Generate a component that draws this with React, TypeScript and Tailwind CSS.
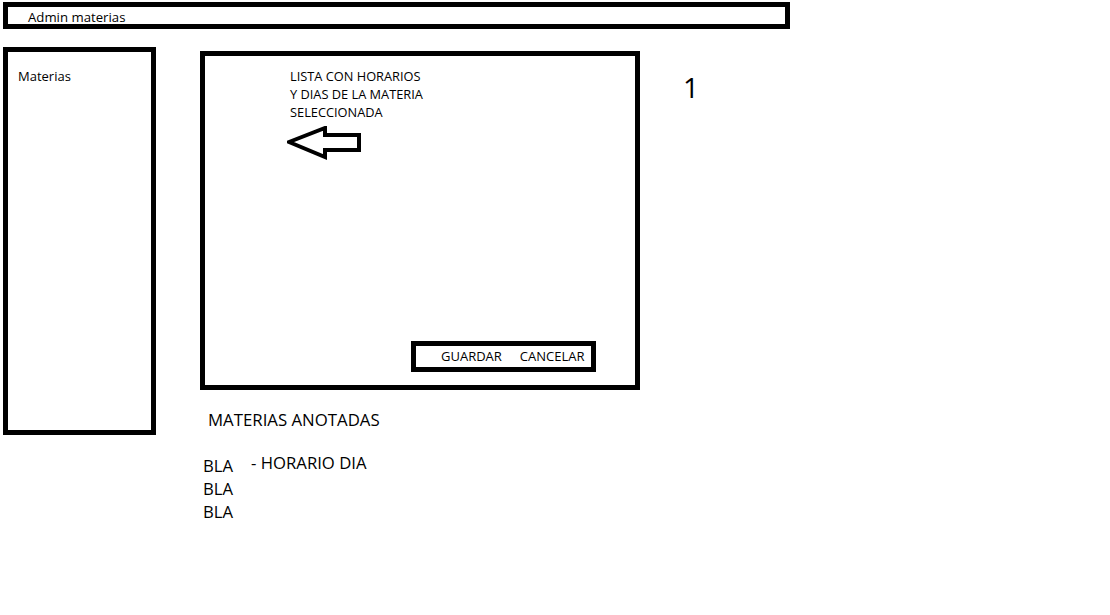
export default function App() {
  return (
    <div className="w-[1110px] h-[615px] bg-white text-black font-['Open_Sans',sans-serif] overflow-hidden">
      <div className="ml-[3px] mt-[2px] w-[787px] h-[27px] border-[5px] border-black flex items-center pt-[4px] pl-[20px] text-[13.2px] leading-none">
        Admin materias
      </div>

      <div className="flex mt-[18px]">
        <div className="ml-[3px] w-[153px] h-[388px] border-[5px] border-black pl-[10px] pt-[18px] text-[13px] leading-none">
          Materias
        </div>

        <div className="ml-[44px] mt-[4px] flex flex-col">
          <div className="w-[440px] h-[339px] border-[5px] border-black flex flex-col">
            <div className="ml-[85px] mt-[11px] text-[12.8px] leading-[18px]">
              <div>LISTA CON HORARIOS</div>
              <div>Y DIAS DE LA MATERIA</div>
              <div>SELECCIONADA</div>
            </div>
            <svg className="ml-[82px] mt-[5px]" width="76" height="34" viewBox="0 0 76 34">
              <path
                d="M2 16 L38 2 L38 9 L72 9 L72 24 L38 24 L38 31 Z"
                fill="none"
                stroke="black"
                strokeWidth="4"
                strokeLinejoin="miter"
              />
            </svg>
            <div className="mt-auto mb-[13px] mr-[39px] self-end w-[185px] h-[31px] border-[5px] border-black flex items-center pl-[25px] gap-[18px] text-[13px] leading-none">
              <span>GUARDAR</span>
              <span>CANCELAR</span>
            </div>
          </div>

          <div className="ml-[8px] mt-[22px] text-[16.8px] leading-none">MATERIAS ANOTADAS</div>

          <div className="flex mt-[25px] text-[16.7px]">
            <div className="ml-[3px] leading-[23px]">
              <div>BLA</div>
              <div>BLA</div>
              <div>BLA</div>
            </div>
            <div className="ml-[18px] -mt-[3px] leading-[23px]">- HORARIO DIA</div>
          </div>
        </div>

        <div className="ml-[43px] mt-[26px] text-[28px] leading-none">1</div>
      </div>
    </div>
  );
}
